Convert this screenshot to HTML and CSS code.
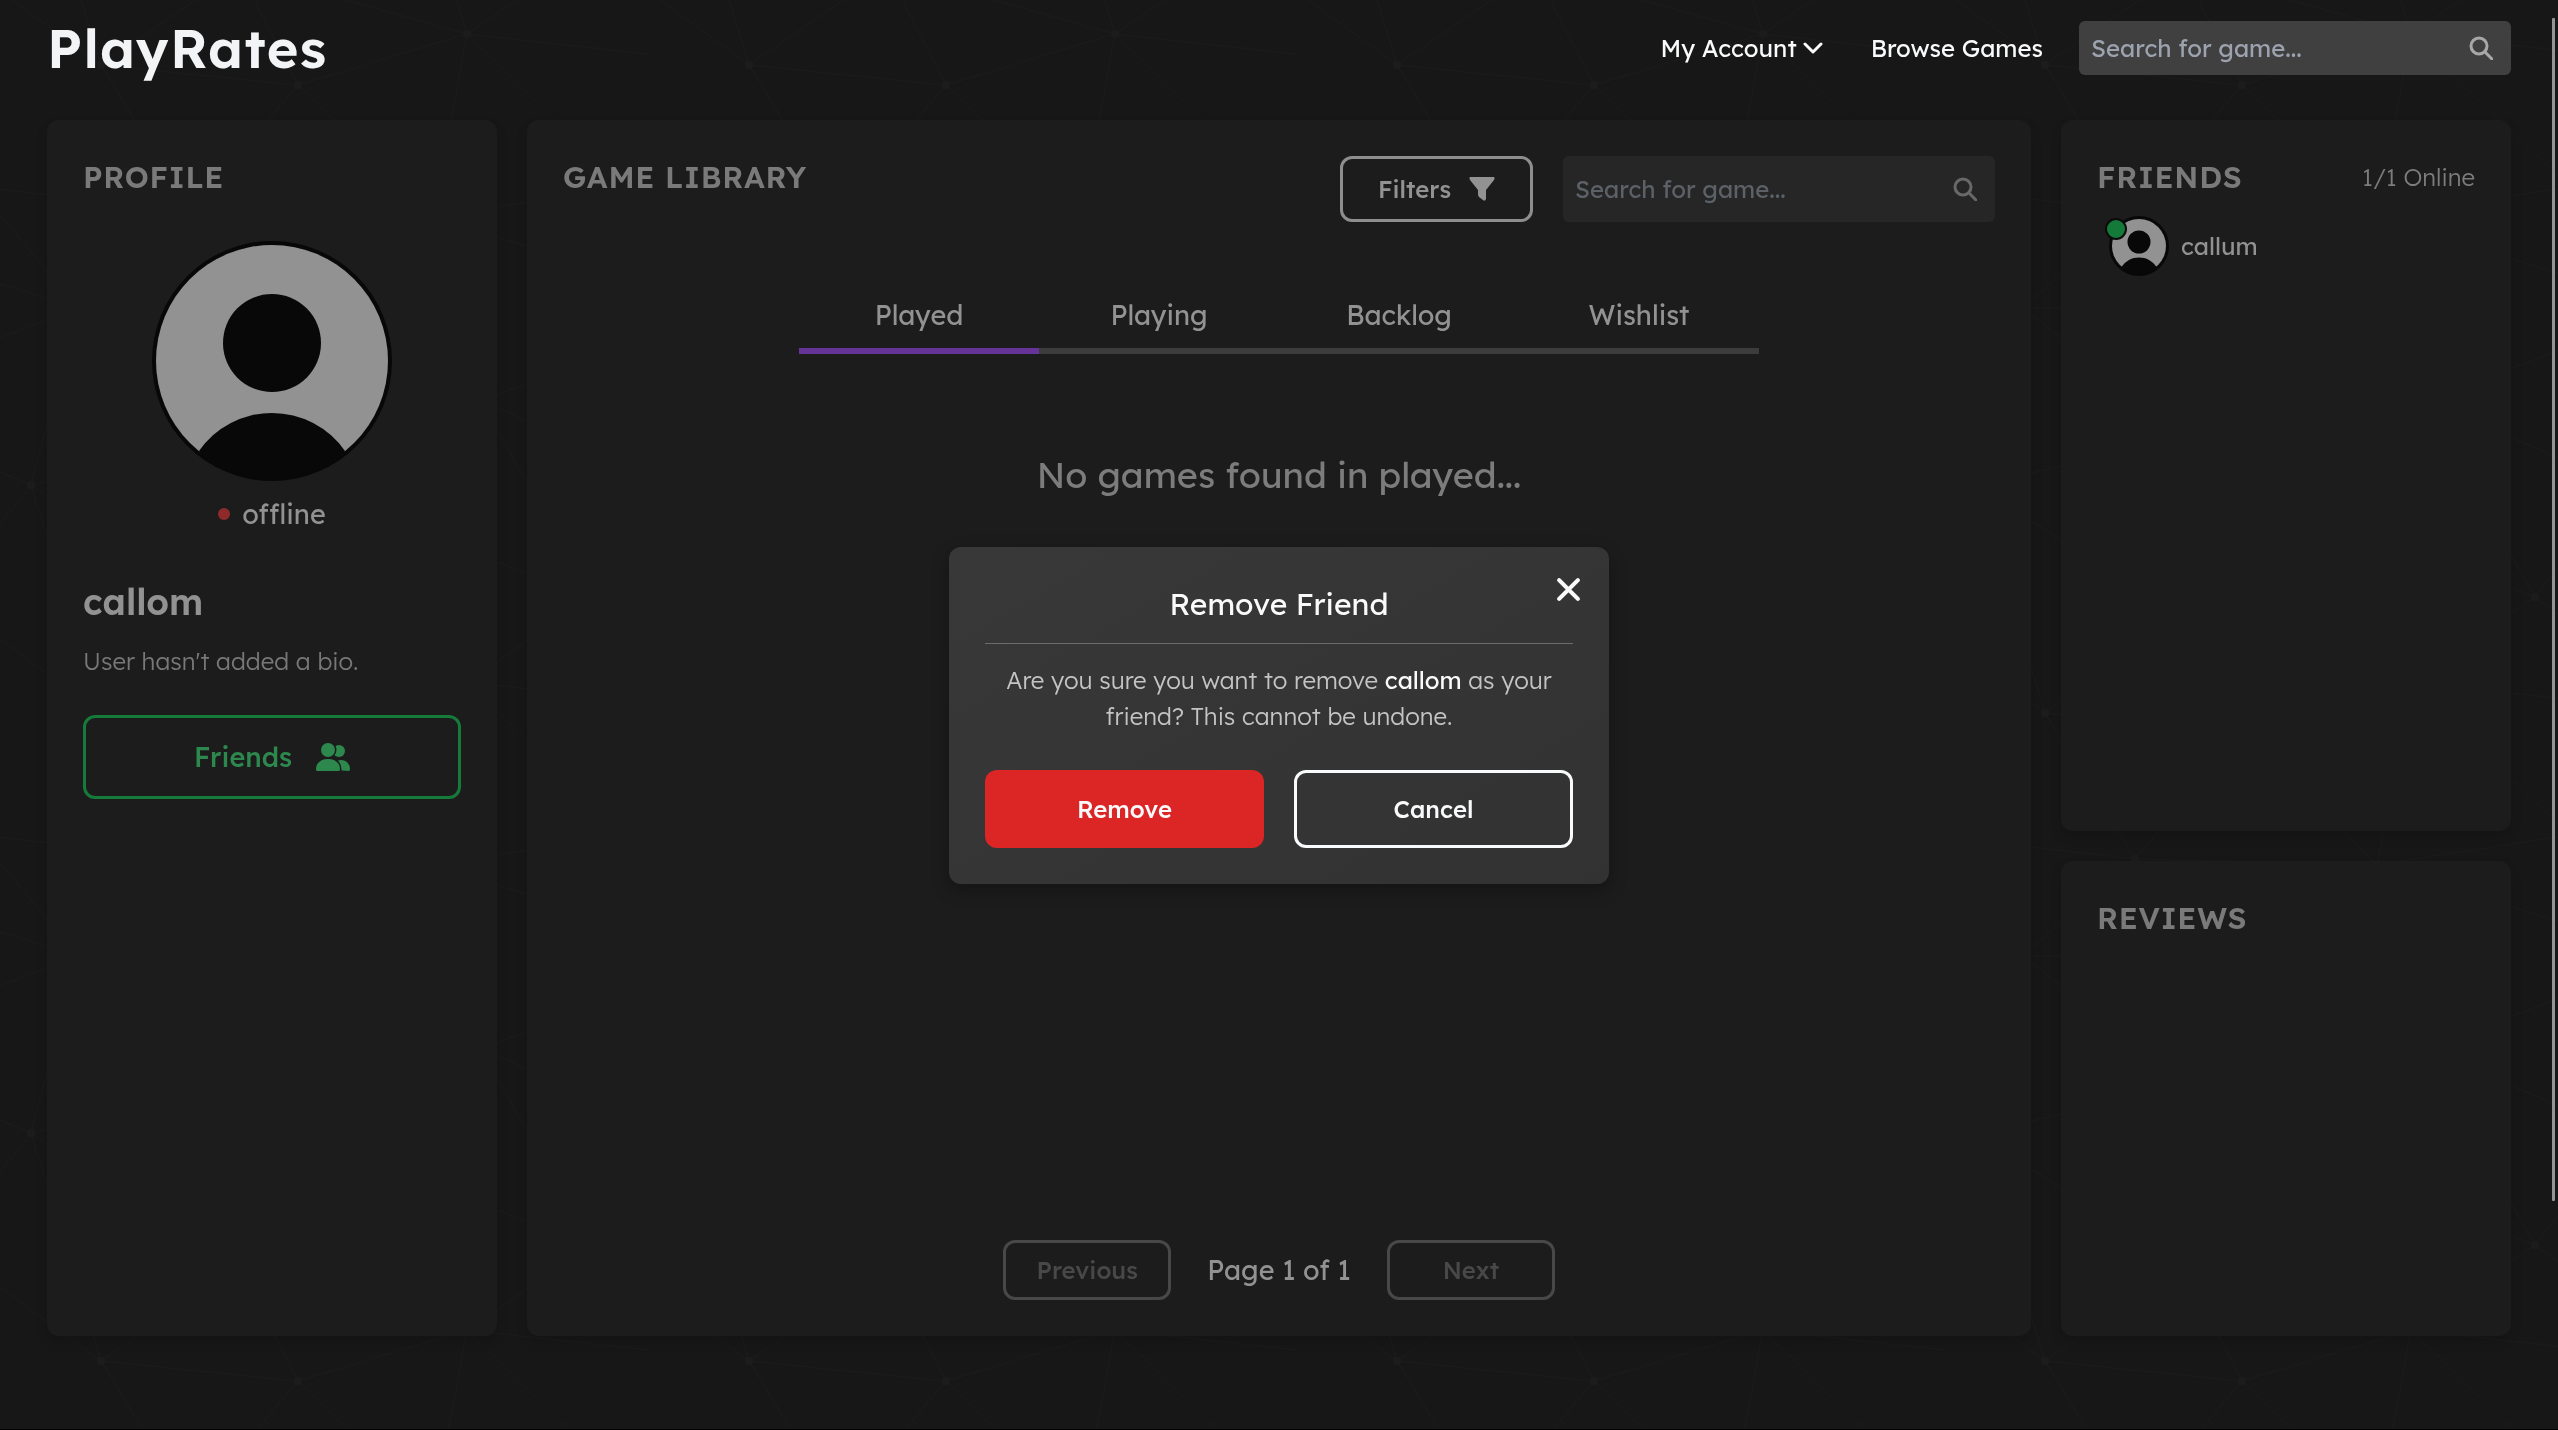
FILE: index.html
```html
<!DOCTYPE html>
<html lang="en">
<head>
<meta charset="utf-8">
<title>PlayRates</title>
<meta name="viewport" content="width=device-width, initial-scale=1">
<link rel="stylesheet" href="styles.css">
</head>
<body>
<svg class="backdrop" aria-hidden="true">
  <defs>
    <g id="mesh">
      <path d="M101 65L298 85L467 34L749 65M101 65L191 211L298 85L433 217L467 34L625 187L749 65M191 211L-23 187M191 211L433 217L625 187L726 308M-23 187L78 308M191 211L78 308L31 485L101 713M433 217L726 308L481 401L679 485M-215 217L78 308L-167 401L31 485M78 308L330 309L191 211M330 309L433 217M78 308L250 438L31 485L239 618L250 438L481 401L433 217M250 438L330 309L481 401M481 401L422 534L250 438M481 401L591 597L422 534L239 618M591 597L679 485M-57 597L31 485M591 597L749 713M-57 597L101 713M591 597L467 682M-57 -51L101 65M31 -163L101 65M239 -30L101 65M239 -30L298 85M239 -30L467 34M422 -114L467 34M591 -51L467 34M591 -51L749 65M239 618L101 713M239 618L298 733M239 618L467 682M422 534L467 682"/>
      <circle cx="101" cy="65" r="4"/><circle cx="298" cy="85" r="4"/><circle cx="467" cy="34" r="4"/>
      <circle cx="191" cy="211" r="4"/><circle cx="31" cy="485" r="4"/><circle cx="591" cy="597" r="4"/>
      <circle cx="625" cy="187" r="4"/><circle cx="433" cy="217" r="4"/><circle cx="78" cy="308" r="4"/>
    </g>
    <pattern id="mesh-tile" width="648" height="648" patternUnits="userSpaceOnUse"><use href="#mesh"/></pattern>
  </defs>
  <rect width="100%" height="100%" fill="url(#mesh-tile)"/>
</svg>

<header class="topbar">
  <a class="logo" href="#">PlayRates</a>
  <nav class="nav">
    <button class="nav-link" type="button">My Account
      <svg class="chevron" viewBox="0 0 20 12" aria-hidden="true"><path d="M2 2l8 8 8-8"/></svg>
    </button>
    <a class="nav-link" href="#">Browse Games</a>
  </nav>
  <form class="search search-top">
    <input type="search" placeholder="Search for game..." aria-label="Search for game">
    <button type="submit" aria-label="Search"><svg viewBox="0 0 24 24" aria-hidden="true"><circle cx="10" cy="10" r="8"/><path d="M16 16l7 7"/></svg></button>
  </form>
</header>

<main class="layout">
  <section class="card profile">
    <h2 class="heading">Profile</h2>
    <svg class="avatar" viewBox="0 0 240 240" role="img" aria-label="callom">
      <circle cx="120" cy="120" r="120" class="ink"/>
      <circle cx="120" cy="120" r="116" class="fill"/>
      <circle cx="120" cy="102" r="49" class="ink"/>
      <path d="M47 210A89 89 0 0 1 193 210L191 214A118 118 0 0 1 49 214Z" class="ink"/>
    </svg>
    <p class="status"><span class="status-dot"></span>offline</p>
    <h3 class="username">callom</h3>
    <p class="bio">User hasn't added a bio.</p>
    <button class="friends-btn" type="button">Friends
      <svg viewBox="0 0 34 28" aria-hidden="true">
        <circle cx="23" cy="8" r="6"/><path d="M20 27v-8q2-2 5-2c5 0 9 4 9 9q0 2-1 2z"/>
        <g class="front"><circle cx="12" cy="7" r="7"/><path d="M1 28q-1 0-1-2c0-6 5-10 12-10s12 4 12 10q0 2-1 2z"/></g>
      </svg>
    </button>
  </section>

  <section class="card library">
    <div class="library-head">
      <h2 class="heading">Game Library</h2>
      <div class="tools">
        <button class="filters-btn" type="button">Filters
          <svg viewBox="0 0 26 24" aria-hidden="true"><path d="M1 0h24q1 1 0 3l-8 10v9q-1 3-3 1l-4-3q-1-1-1-3v-4L1 3Q0 1 1 0z"/></svg>
        </button>
        <form class="search search-library">
          <input type="search" placeholder="Search for game..." aria-label="Search library">
          <button type="submit" aria-label="Search library"><svg viewBox="0 0 24 24" aria-hidden="true"><circle cx="10" cy="10" r="8"/><path d="M16 16l7 7"/></svg></button>
        </form>
      </div>
    </div>
    <div class="tabs" role="tablist">
      <button class="tab active" role="tab" aria-selected="true">Played</button>
      <button class="tab" role="tab" aria-selected="false">Playing</button>
      <button class="tab" role="tab" aria-selected="false">Backlog</button>
      <button class="tab" role="tab" aria-selected="false">Wishlist</button>
    </div>
    <p class="empty">No games found in played...</p>
    <div class="pager">
      <button class="page-btn" type="button" disabled>Previous</button>
      <span>Page 1 of 1</span>
      <button class="page-btn" type="button" disabled>Next</button>
    </div>
  </section>

  <div class="side">
    <section class="card">
      <div class="friends-head">
        <h2 class="heading">Friends</h2>
        <span class="online">1/1 Online</span>
      </div>
      <a class="friend" href="#">
        <span class="friend-pic">
          <svg viewBox="0 0 240 240" aria-hidden="true">
            <circle cx="120" cy="120" r="120" class="ink"/>
            <circle cx="120" cy="120" r="108" class="fill"/>
            <circle cx="120" cy="104" r="46" class="ink"/>
            <path d="M50 204A83 83 0 0 1 190 204L188 212A114 114 0 0 1 52 212Z" class="ink"/>
          </svg>
          <span class="badge"></span>
        </span>
        callum
      </a>
    </section>
    <section class="card">
      <h2 class="heading">Reviews</h2>
    </section>
  </div>
</main>

<div class="overlay">
  <section class="modal" role="dialog" aria-modal="true" aria-labelledby="modal-title">
    <button class="close" type="button" aria-label="Close"><svg viewBox="0 0 24 24" aria-hidden="true"><path d="M3 3l18 18M21 3L3 21"/></svg></button>
    <h2 class="modal-title" id="modal-title">Remove Friend</h2>
    <p class="modal-text">Are you sure you want to remove <strong>callom</strong> as your friend? This cannot be undone.</p>
    <div class="modal-actions">
      <button class="btn-danger" type="button">Remove</button>
      <button class="btn-outline" type="button">Cancel</button>
    </div>
  </section>
</div>
<div class="scroll-thumb"></div>
</body>
</html>
```

FILE: styles.css
```css
* { box-sizing: border-box; margin: 0; }

body {
  min-height: 100vh;
  background: #171717;
  border-bottom: 1px solid #000;
  color: #929292;
  font-family: Lexend, Inter, sans-serif;
  font-size: 24px;
  line-height: 36px;
}

button, input { font: inherit; color: inherit; }
button { background: none; border: 0; padding: 0; cursor: pointer; }
a { color: inherit; text-decoration: none; }

.backdrop {
  position: fixed;
  inset: 0 0 1px;
  width: 100%;
  height: 100%;
  z-index: -1;
}
#mesh path { fill: none; stroke: #1b1b1b; stroke-width: 1; }
#mesh circle { fill: #1c1c1c; }

/* Header */
.topbar {
  display: flex;
  align-items: center;
  height: 96px;
  padding: 0 47px;
}
.logo {
  margin-right: auto;
  color: #f3f4f6;
  font-size: 54px;
  line-height: 72px;
  font-weight: 600;
  letter-spacing: 0.025em;
}
.nav {
  display: flex;
  gap: 48px;
  margin-right: 36px;
  color: #f9fafb;
  font-weight: 400;
}
.nav-link { display: flex; align-items: center; gap: 6px; }
.chevron { width: 20px; height: 12px; fill: none; stroke: currentColor; stroke-width: 3; stroke-linecap: round; stroke-linejoin: round; }

.search {
  display: flex;
  align-items: center;
  width: 432px;
  padding: 0 18px 0 12px;
  border-radius: 6px;
}
.search input {
  flex: 1;
  min-width: 0;
  padding: 0;
  border: 0;
  outline: 0;
  background: none;
  appearance: none;
}
.search input::placeholder { color: inherit; opacity: 1; }
.search button { display: flex; }
.search svg { width: 24px; height: 24px; fill: none; stroke: currentColor; stroke-width: 3; stroke-linecap: round; }
.search-top { height: 54px; background: #404040; color: #9ca3af; }
.search-top svg { color: #a8a8a8; }
.search-library { height: 66px; background: #262626; color: #5c6167; }
.search-library svg { color: #686868; }

/* Page grid */
.layout {
  display: grid;
  grid-template-columns: 450px minmax(0, 1fr) 450px;
  gap: 30px;
  min-height: 85vh;
  margin: 24px 47px 0;
}
.side { display: grid; grid-template-rows: 3fr 2fr; gap: 30px; }
.card {
  padding: 36px;
  border-radius: 12px;
  background: #1c1c1c;
  box-shadow: 0 6px 12px rgba(0, 0, 0, 0.14);
}
.heading {
  color: #7a7a7a;
  font-size: 30px;
  line-height: 42px;
  font-weight: 600;
  letter-spacing: 0.025em;
  text-transform: uppercase;
}

/* Profile */
.profile { display: flex; flex-direction: column; }
.avatar { align-self: center; width: 240px; height: 240px; margin-top: 43px; }
.ink { fill: #080808; }
.fill { fill: #929292; }
.status {
  display: flex;
  justify-content: center;
  align-items: center;
  gap: 12px;
  margin-top: 12px;
  font-size: 27px;
  line-height: 42px;
}
.status-dot { width: 12px; height: 12px; border-radius: 50%; background: #8f2a2a; }
.username { margin-top: 40px; font-size: 36px; line-height: 54px; font-weight: 600; }
.bio { margin-top: 14px; color: #787878; font-weight: 300; }
.friends-btn {
  display: flex;
  justify-content: center;
  align-items: center;
  gap: 24px;
  height: 84px;
  margin-top: 36px;
  border: 3px solid #167a3a;
  border-radius: 12px;
  color: #2d884e;
  font-size: 27px;
  font-weight: 500;
}
.friends-btn svg { width: 34px; height: 28px; fill: currentColor; }
.friends-btn .front { stroke: #1c1c1c; stroke-width: 3; paint-order: stroke; }

/* Library */
.library { display: flex; flex-direction: column; align-items: center; }
.library-head { display: flex; justify-content: space-between; width: 100%; }
.tools { display: flex; gap: 30px; }
.filters-btn {
  display: flex;
  justify-content: center;
  align-items: center;
  gap: 18px;
  width: 193px;
  height: 66px;
  border: 3px solid #8e8e8e;
  border-radius: 12px;
  font-weight: 500;
}
.filters-btn svg { width: 26px; height: 24px; fill: currentColor; }
.tabs { display: flex; width: 100%; max-width: 960px; margin-top: 60px; }
.tab { flex: 1; height: 72px; border-bottom: 6px solid #3c3c3c; font-size: 27px; }
.tab.active { border-color: #663399; }
.empty { margin-top: 94px; color: #7c7c7c; font-size: 36px; line-height: 54px; }
.pager {
  display: flex;
  align-items: center;
  gap: 36px;
  margin-top: auto;
  font-size: 27px;
}
.page-btn {
  width: 168px;
  height: 60px;
  border: 3px solid #484848;
  border-radius: 12px;
  color: #484848;
  font-size: 24px;
  font-weight: 500;
}

/* Friends */
.friends-head { display: flex; justify-content: space-between; align-items: center; }
.online { color: #7c7c7c; font-weight: 300; }
.friend { display: flex; align-items: center; gap: 12px; margin: 18px 12px; }
.friend-pic { position: relative; display: flex; width: 60px; height: 60px; }
.friend-pic svg { width: 60px; height: 60px; }
.badge {
  position: absolute;
  top: 2px;
  left: -4px;
  width: 22px;
  height: 22px;
  border: 2px solid #0b0b0b;
  border-radius: 50%;
  background: #147a3a;
}

/* Remove friend dialog */
.overlay {
  position: fixed;
  inset: 0;
  display: flex;
  justify-content: center;
  align-items: center;
  pointer-events: none;
}
.modal {
  position: relative;
  width: 660px;
  padding: 36px;
  border-radius: 12px;
  background: linear-gradient(150deg, #383838, #323232);
  box-shadow: 0 6px 18px rgba(0, 0, 0, 0.3);
  text-align: center;
  pointer-events: auto;
}
.close { position: absolute; top: 30px; right: 28px; display: flex; }
.close svg { width: 25px; height: 25px; fill: none; stroke: #fafafa; stroke-width: 4; stroke-linecap: round; }
.modal-title {
  padding-bottom: 18px;
  border-bottom: 1px solid #6b6b6b;
  color: #fafafa;
  font-size: 30px;
  line-height: 42px;
  font-weight: 400;
}
.modal-text { margin-top: 18px; color: #c4c4c4; font-weight: 300; }
.modal-text strong { color: #fafafa; font-weight: 400; }
.modal-actions { display: grid; grid-template-columns: 1fr 1fr; gap: 30px; margin-top: 36px; }
.modal-actions button { height: 78px; border-radius: 12px; color: #f9fafb; font-weight: 500; }
.btn-danger { background: #dc2626; }
.modal-actions .btn-outline { border: 3px solid #f9fafb; }

.scroll-thumb {
  position: fixed;
  top: 18px;
  bottom: 16vh;
  right: 3px;
  width: 3px;
  border-radius: 1px;
  background: #949494;
}
```
